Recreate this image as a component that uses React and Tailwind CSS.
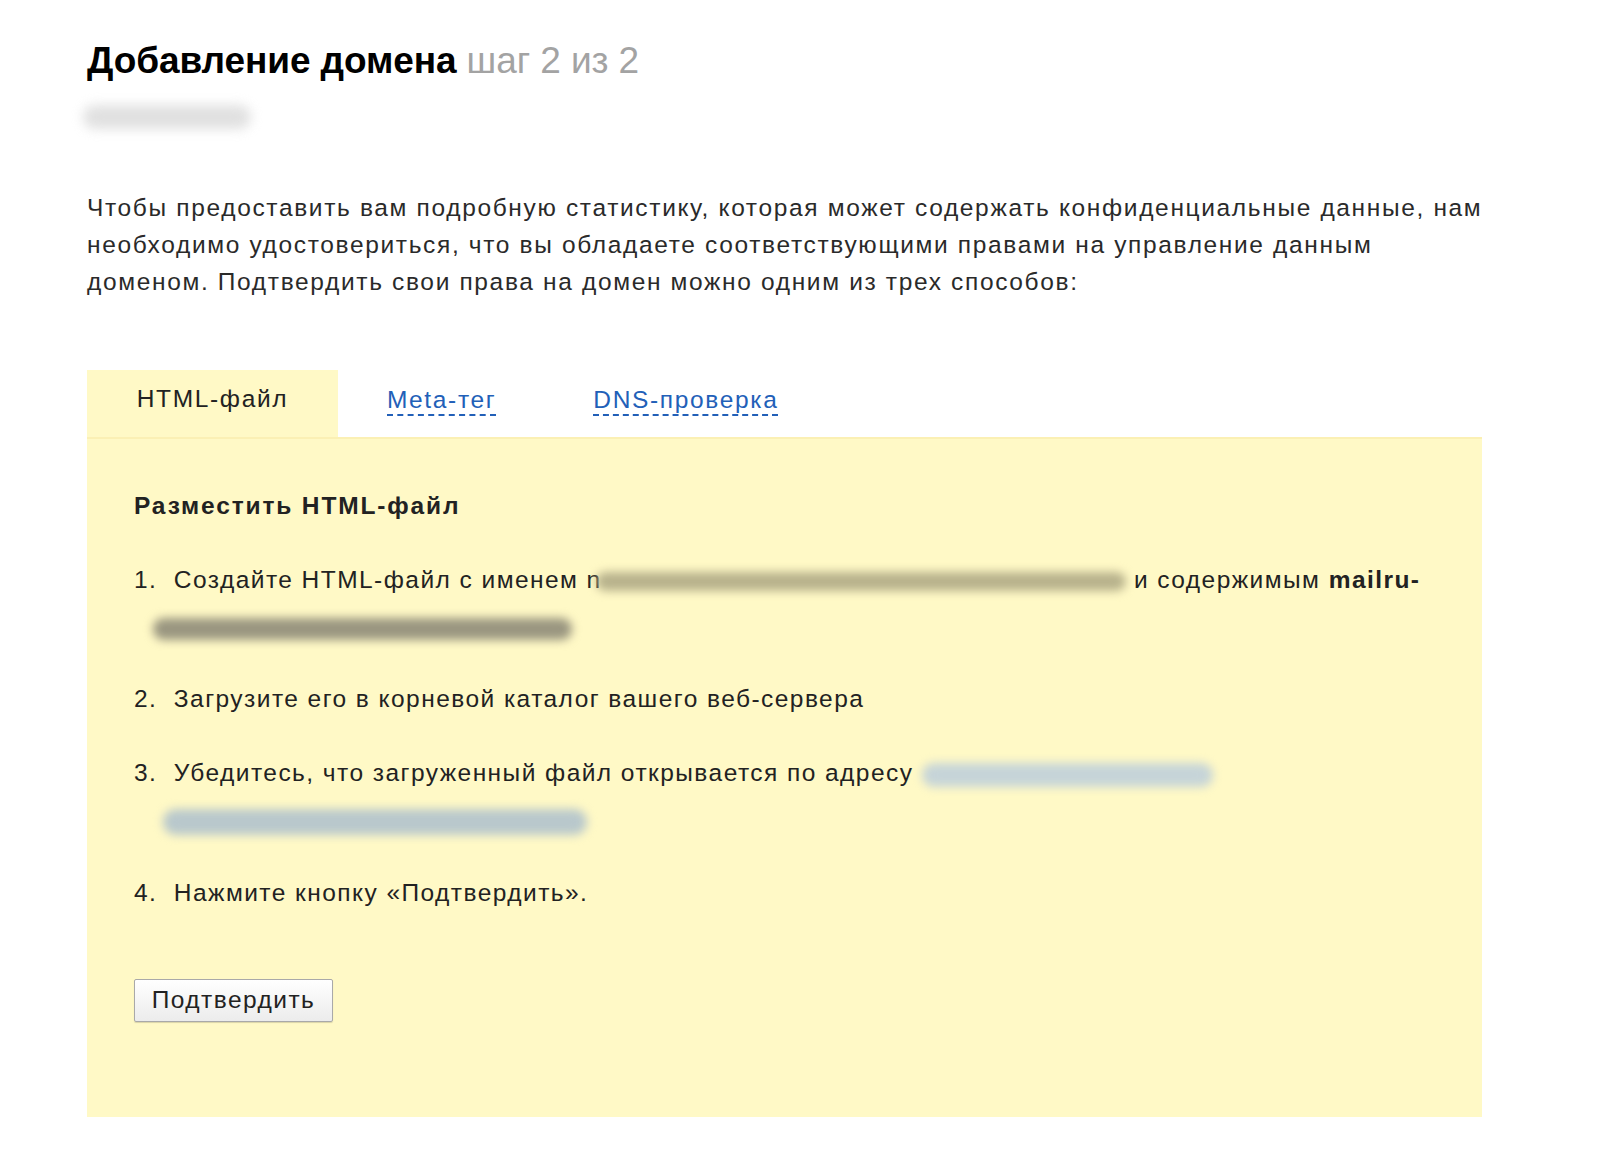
import React from "react";

const Blur = ({ className }) => (
  <span className={`inline-block align-middle rounded-full blur-[5px] ${className}`} />
);

const App = () => {
  return (
    <div className="min-h-screen bg-white font-['Liberation_Sans',Arial,sans-serif] text-[#222]">
      <div className="pl-[87px] pt-[38px] w-[1482px]">
        <h1 className="text-[37px] leading-[45px] tracking-[-0.1px]">
          <span className="font-bold text-black">Добавление домена</span>{" "}
          <span className="text-[#a3a3a3]">шаг 2 из 2</span>
        </h1>
        <div className="-ml-[4px] mt-[22px] h-[24px] w-[168px] rounded-full bg-[#d9d9d9] blur-[6px] opacity-80" />

        <p className="mt-[60px] text-[24.5px] leading-[37px] tracking-[1.65px] text-[#2a2a2a] whitespace-nowrap">
          Чтобы предоставить вам подробную статистику, которая может содержать конфиденциальные данные, нам
          <br />
          необходимо удостовериться, что вы обладаете соответствующими правами на управление данным
          <br />
          доменом. Подтвердить свои права на домен можно одним из трех способов:
        </p>

        <div className="mt-[70px] flex items-end h-[67px] text-[24.5px] tracking-[1.65px]">
          <div className="w-[251px] h-full flex items-center justify-center pb-[8px] bg-[#fff9c6] text-[#222]">
            HTML-файл
          </div>
          <a className="ml-[49px] mb-[21px] text-[#2260b8] border-b-2 border-dashed border-[#2260b8] leading-[29px]">
            Meta-тег
          </a>
          <a className="ml-[97px] mb-[21px] text-[#2260b8] border-b-2 border-dashed border-[#2260b8] leading-[29px]">
            DNS-проверка
          </a>
        </div>

        <div className="bg-[#fff9c6] border-t-2 border-[#fbf0b4] h-[680px] pl-[47px] pr-[40px] pt-[48px] text-[24.5px] tracking-[1.45px]">
          <h2 className="font-bold leading-[37px] text-[#222] tracking-[1.85px]">Разместить HTML-файл</h2>
          <ol className="mt-[31px] whitespace-nowrap">
            <li className="leading-[49px] mb-[21px]">
              <span>1.&nbsp; Создайте HTML-файл с именем n</span>
              <Blur className="w-[530px] h-[19px] bg-[#b8b28c] -ml-[6px]" />
              <span> и содержимым </span>
              <span className="font-bold">mailru-</span>
              <div className="pl-[19px] h-[49px] flex items-center">
                <Blur className="w-[419px] h-[22px] bg-[#9a9680]" />
              </div>
            </li>
            <li className="leading-[49px] mb-[25px]">2.&nbsp; Загрузите его в корневой каталог вашего веб-сервера</li>
            <li className="leading-[49px] mb-[22px]">
              <span>3.&nbsp; Убедитесь, что загруженный файл открывается по адресу </span>
              <Blur className="w-[291px] h-[24px] bg-[#c6d4d8]" />
              <div className="pl-[29px] h-[49px] flex items-center">
                <Blur className="w-[424px] h-[26px] bg-[#b9c8cc]" />
              </div>
            </li>
            <li className="leading-[49px]">4.&nbsp; Нажмите кнопку «Подтвердить».</li>
          </ol>
          <button
            type="button"
            className="mt-[62px] h-[43px] w-[199px] rounded-[2px] border border-[#a9a9a9] bg-gradient-to-b from-white to-[#ececec] text-[24.5px] tracking-[1.45px] text-[#222] shadow-[0_1px_1px_rgba(0,0,0,0.15)]"
          >
            Подтвердить
          </button>
        </div>
      </div>
    </div>
  );
};

export default App;
